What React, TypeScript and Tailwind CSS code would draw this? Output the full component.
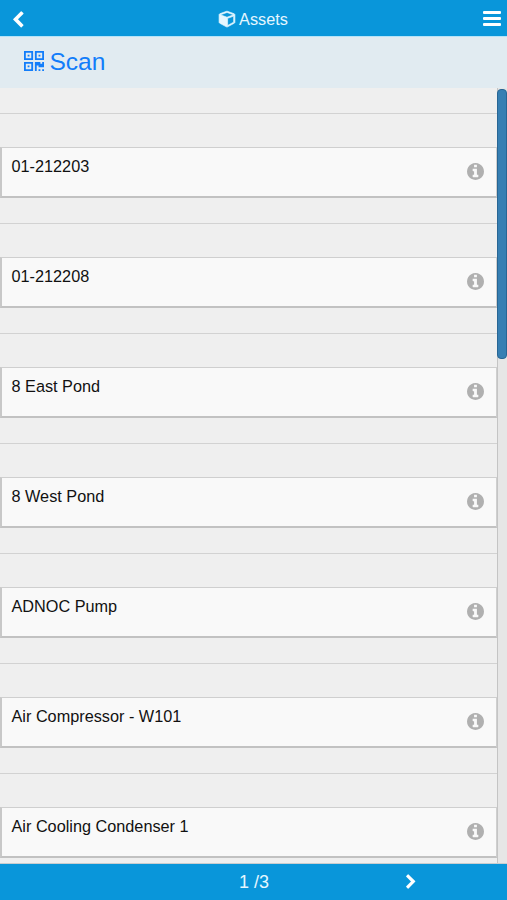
interface IconProps {
  viewBox: string;
  path: string;
  className: string;
}

function Icon({ viewBox, path, className }: IconProps) {
  return (
    <svg viewBox={viewBox} className={className} fill="currentColor" aria-hidden="true">
      <path d={path} />
    </svg>
  );
}

const CHEVRON_LEFT =
  'M1427 301l-531 531 531 531q19 19 19 45t-19 45l-166 166q-19 19-45 19t-45-19l-742-742q-19-19-19-45t19-45l742-742q19-19 45-19t45 19l166 166q19 19 19 45t-19 45z';
const CHEVRON_RIGHT =
  'M1363 877l-742 742q-19 19-45 19t-45-19l-166-166q-19-19-19-45t19-45l531-531-531-531q-19-19-19-45t19-45l166-166q19-19 45-19t45 19l742 742q19 19 19 45t-19 45z';
const CUBE =
  'M896 1629l640-349v-636l-640 233v752zm-64-865l698-254-698-254-698 254zm832-252v768q0 35-18 65t-49 47l-704 384q-28 16-61 16t-61-16l-704-384q-31-17-49-47t-18-65v-768q0-40 23-73t61-47l704-256q22-8 44-8t44 8l704 256q38 14 61 47t23 73z';
const QRCODE =
  'M384 1152v128h-128v-128h128zm0-768v128h-128v-128h128zm768 0v128h-128v-128h128zm-1024 1023h384v-383h-384v383zm0-767h384v-384h-384v384zm768 0h384v-384h-384v384zm-256 256v640h-640v-640h640zm512 512v128h-128v-128h128zm256 0v128h-128v-128h128zm0-512v384h-384v-128h-128v384h-128v-640h384v128h128v-128h128zm-768-768v640h-640v-640h640zm768 0v640h-640v-640h640z';
const INFO =
  'M1152 1376v-160q0-14-9-23t-23-9h-96v-512q0-14-9-23t-23-9h-320q-14 0-23 9t-9 23v160q0 14 9 23t23 9h96v320h-96q-14 0-23 9t-9 23v160q0 14 9 23t23 9h448q14 0 23-9t9-23zm-128-896v-160q0-14-9-23t-23-9h-192q-14 0-23 9t-9 23v160q0 14 9 23t23 9h192q14 0 23-9t9-23zm640 416q0 209-103 385.5t-279.5 279.5-385.5 103-385.5-103-279.5-279.5-103-385.5 103-385.5 279.5-279.5 385.5-103 385.5 103 279.5 279.5 103 385.5z';

const assets = [
  '01-212203',
  '01-212208',
  '8 East Pond',
  '8 West Pond',
  'ADNOC Pump',
  'Air Compressor - W101',
  'Air Cooling Condenser 1',
];

function Header() {
  return (
    <header className="grid h-[37px] shrink-0 grid-cols-3 items-center border-b border-[#b5e3f8] bg-[#0996da] pt-0.5 text-white">
      <button aria-label="Back" className="ml-[9px] justify-self-start pt-px">
        <Icon viewBox="0 0 1792 1792" path={CHEVRON_LEFT} className="size-[18px]" />
      </button>
      <h1 className="flex items-center justify-center gap-1 pb-px text-[16.25px] leading-6 text-[#e5f7ff]">
        <Icon
          viewBox="0 0 1664 1792"
          path={CUBE}
          className="h-[17px] w-4 overflow-visible stroke-current stroke-[70px]"
        />
        Assets
      </h1>
      <button aria-label="Menu" className="mr-[6px] -mt-[2px] flex w-[18px] flex-col gap-[3px] justify-self-end">
        <span className="h-[3px] rounded-[1px] bg-white" />
        <span className="h-[3px] rounded-[1px] bg-white" />
        <span className="h-[3px] rounded-[1px] bg-white" />
      </button>
    </header>
  );
}

function AssetRow({ name }: { name: string }) {
  return (
    <li className="h-[110px] shrink-0">
      <div className="h-[26px] border-b border-[#d2d2d2]" />
      <div className="mt-[33px] flex h-[51px] items-start justify-between border-t border-r border-b-2 border-l-2 border-t-[#cfcfcf] border-r-[#cfcfcf] border-b-[#c2c2c2] border-l-[#c8c8c8] bg-[#f9f9f9] pr-[12px] pl-[9.5px]">
        <span className="mt-[6px] text-[16.25px] leading-6 text-[#111]">{name}</span>
        <button aria-label="Details" className="mt-[15px] text-[#b0b0b0]">
          <Icon viewBox="128 128 1536 1536" path={INFO} className="size-[17px]" />
        </button>
      </div>
    </li>
  );
}

export default function App() {
  return (
    <div className="flex h-[900px] w-[507px] flex-col overflow-hidden bg-[#efefef] font-['Liberation_Sans',Arial,sans-serif]">
      <Header />

      <div className="flex h-[51px] shrink-0 items-center gap-[6px] bg-[#e1ebf1] pl-[23.5px] text-[#127dfa]">
        <Icon viewBox="0 128 1408 1408" path={QRCODE} className="-mt-[4px] size-5" />
        <span className="text-[24.5px] leading-none">Scan</span>
      </div>

      <main className="flex min-h-0 flex-1 border-b border-[#c9cdcf]">
        <ul className="flex min-w-0 flex-1 flex-col overflow-hidden">
          {assets.map(name => (
            <AssetRow key={name} name={name} />
          ))}
        </ul>
        {/* Scrollbar track and thumb */}
        <div className="w-[10px] border-l border-[#c4c4c4] bg-[#e6e6e6]">
          <div className="-ml-px mt-px h-[270px] rounded-[4px] border border-[#286694] bg-[#377fb3]" />
        </div>
      </main>

      <footer className="grid h-9 shrink-0 grid-cols-[1fr_auto_1fr] items-center bg-[#0996da]">
        <span />
        <span className="pl-px text-lg text-[#e5f7ff]">1 /3</span>
        <button aria-label="Next page" className="ml-[134px] justify-self-start text-white">
          <Icon viewBox="0 0 1792 1792" path={CHEVRON_RIGHT} className="size-4" />
        </button>
      </footer>
    </div>
  );
}
